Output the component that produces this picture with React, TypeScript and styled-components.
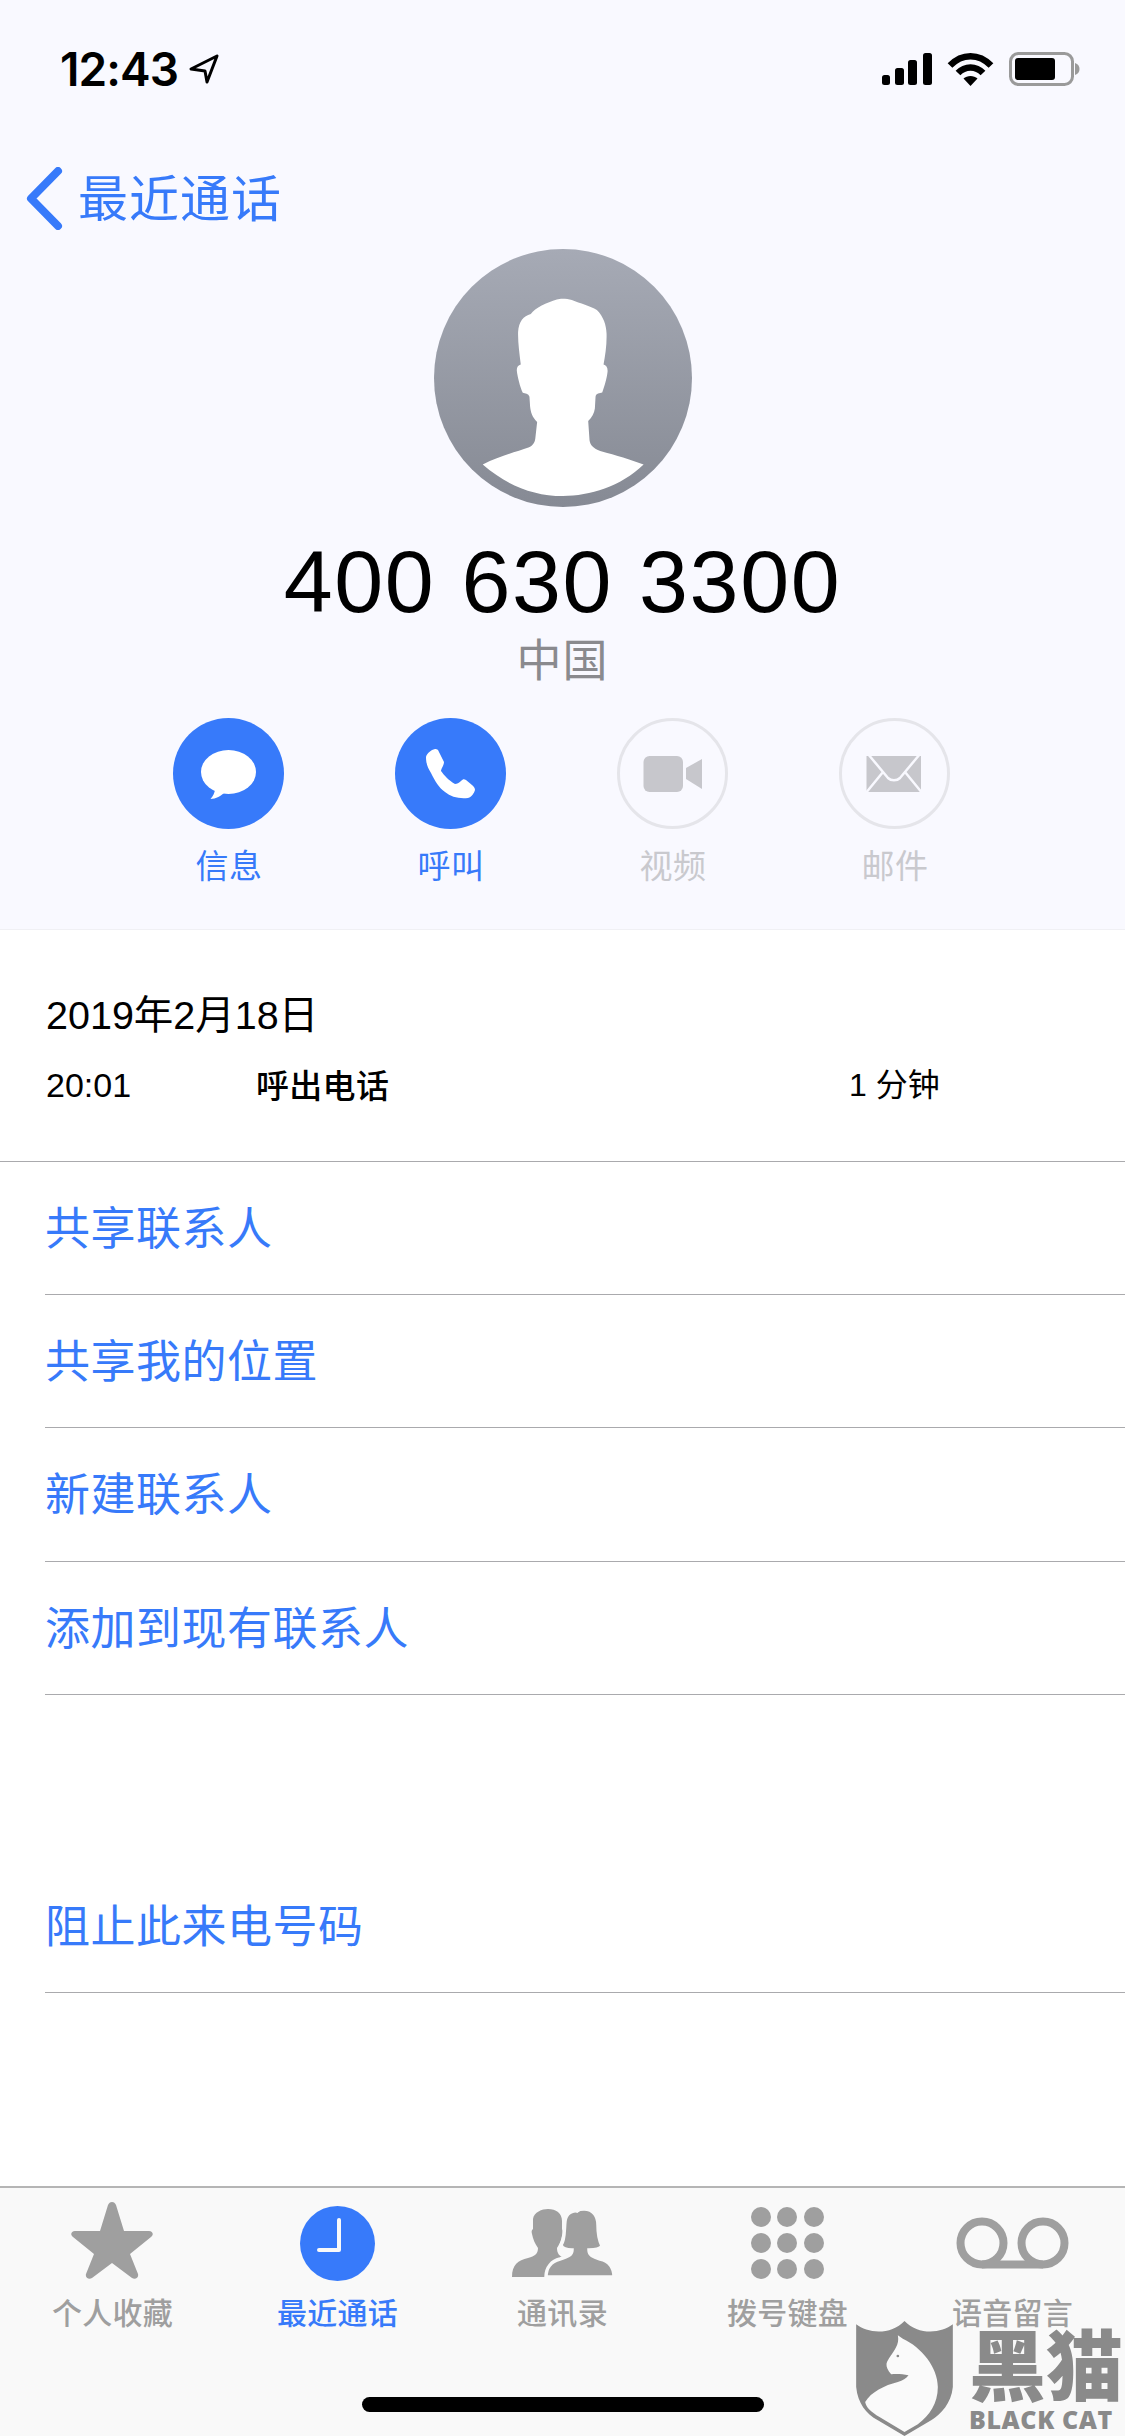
import React from "react";
import styled, { createGlobalStyle } from "styled-components";

const BLUE = "#377afa";
const CJK = `"Noto Sans CJK SC", "Noto Sans", sans-serif`;
const LATIN = `"Liberation Sans", "Noto Sans CJK SC", sans-serif`;

const Global = createGlobalStyle`
  html, body { margin: 0; padding: 0; background: #fff; }
  * { box-sizing: border-box; }
`;

const Page = styled.div`
  position: relative;
  width: 1125px;
  height: 2436px;
  overflow: hidden;
  display: flex;
  flex-direction: column;
  background: #fff;
  font-family: ${CJK};
`;

const Header = styled.header`
  height: 930px;
  flex: none;
  display: flex;
  flex-direction: column;
  background: #f9f9ff;
  border-bottom: 1px solid #f0f0f4;
`;

const StatusBar = styled.div`
  height: 136px;
  flex: none;
  padding: 52px 45px 0 60px;
  display: flex;
  align-items: flex-start;
  justify-content: space-between;
`;

const StatusLeft = styled.div`
  display: flex;
  align-items: center;
  gap: 10px;
  height: 34px;
`;

const Clock = styled.span`
  font: 600 46px/34px Inter, ${LATIN};
  letter-spacing: -0.9px;
  color: #000;
`;

const StatusRight = styled.div`
  display: flex;
  align-items: flex-start;
  gap: 15px;
`;

const Nav = styled.nav`
  height: 113px;
  flex: none;
  padding: 11px 0 0 26px;
  display: flex;
  align-items: center;
  gap: 15px;
  color: ${BLUE};
`;

const BackLabel = styled.span`
  font-size: 50px;
  line-height: 60px;
  letter-spacing: 1px;
  position: relative;
  top: -3px;
`;

const AvatarDisc = styled.svg`
  width: 258px;
  height: 258px;
  flex: none;
  align-self: center;
  display: block;
`;

const PhoneNumber = styled.h1`
  margin: 25px 0 0;
  height: 100px;
  text-align: center;
  font: 400 88px/100px ${LATIN};
  letter-spacing: 1.6px;
  color: #000;
`;

const Country = styled.div`
  margin-top: 1px;
  height: 50px;
  text-align: center;
  font-size: 45px;
  letter-spacing: 1px;
  line-height: 50px;
  color: #8a8a8e;
`;

const Actions = styled.div`
  margin-top: 35px;
  padding-left: 117px;
  display: grid;
  grid-template-columns: repeat(4, 222px);
`;

const Action = styled.div<{ $on?: boolean }>`
  display: flex;
  flex-direction: column;
  align-items: center;
  gap: 15px;
  color: ${(p) => (p.$on ? BLUE : "#c9c9ce")};
`;

const ActionCircle = styled.div<{ $on?: boolean }>`
  width: 111px;
  height: 111px;
  border-radius: 50%;
  background: ${(p) => (p.$on ? BLUE : "transparent")};
  border: ${(p) => (p.$on ? "none" : "3px solid #e5e5ea")};
  display: flex;
  align-items: center;
  justify-content: center;
`;

const ActionLabel = styled.span`
  padding-left: 2px;
  font-size: 33px;
  letter-spacing: 0.5px;
  line-height: 40px;
`;

const CallLog = styled.section`
  height: 232px;
  flex: none;
  padding: 61px 0 0 46px;
  border-bottom: 1px solid #aaaaad;
  color: #000;
`;

const CallDate = styled.div`
  font: 400 39.5px/48px ${LATIN};
`;

const CallRow = styled.div`
  margin-top: 26px;
  display: grid;
  grid-template-columns: 210px 593px auto;
  font: 400 34px/40px ${LATIN};
`;

const CallType = styled.span`
  font-weight: 500;
  font-size: 33px;
  letter-spacing: 0.3px;
  line-height: 38px;
  font-family: ${CJK};
`;

const CallLength = styled.span`
  font-size: 32px;
`;

const LinkRow = styled.div`
  height: 133.2px;
  flex: none;
  margin-left: 45px;
  padding-bottom: 5px;
  display: flex;
  align-items: center;
  border-bottom: 1px solid #aaaaad;
  font-size: 45px;
  letter-spacing: 0.5px;
  color: ${BLUE};
`;

const Spacer = styled.div`
  height: 165px;
  flex: none;
`;

const TabBar = styled.footer`
  margin-top: auto;
  height: 250px;
  flex: none;
  background: #f9f9f9;
  border-top: 2px solid #b5b5b5;
  padding-top: 12px;
  display: flex;
  flex-direction: column;
  align-items: center;
`;

const Tabs = styled.div`
  width: 100%;
  display: grid;
  grid-template-columns: repeat(5, 225px);
`;

const Tab = styled.div<{ $on?: boolean }>`
  display: flex;
  flex-direction: column;
  align-items: center;
  color: ${(p) => (p.$on ? BLUE : "#9f9f9f")};
`;

const TabIcon = styled.div`
  height: 86px;
  display: flex;
  align-items: center;
  justify-content: center;
`;

const TabLabel = styled.span`
  margin-top: 5px;
  font-size: 30px;
  letter-spacing: 0.3px;
  line-height: 40px;
  font-weight: 500;
`;

const HomeIndicator = styled.div`
  margin-top: 66px;
  width: 402px;
  height: 15px;
  border-radius: 8px;
  background: #000;
`;

const Watermark = styled.div`
  position: absolute;
  left: 856px;
  top: 2321px;
  display: flex;
  align-items: flex-start;
  gap: 16px;
  color: #8a8a8a;
`;

const WatermarkText = styled.div`
  width: 156px;
  padding-top: 1px;
  display: flex;
  flex-direction: column;
  align-items: flex-start;
`;

const WatermarkCn = styled.span`
  font-size: 77px;
  line-height: 80px;
  font-weight: 900;
`;

const WatermarkEn = styled.span`
  font: 800 25px/26px "Open Sans", ${LATIN};
  letter-spacing: 0.6px;
  white-space: nowrap;
  margin-top: 4px;
`;

const Bars = () => (
  <svg width="50" height="32" viewBox="0 0 50 32" style={{ marginTop: 1 }}>
    <rect x="0" y="22" width="8" height="10" rx="2.5" />
    <rect x="13" y="15" width="9" height="17" rx="2.5" />
    <rect x="26" y="7" width="9" height="25" rx="2.5" />
    <rect x="41" y="0" width="9" height="32" rx="2.5" />
  </svg>
);

const Wifi = () => (
  <svg width="47" height="34" viewBox="0 0 47 34" fill="none" stroke="#000" strokeWidth="6.5">
    <path d="M3 13.5 C15 1 32 1 44 13.5" />
    <path d="M11 21 C18 13.5 29 13.5 36 21" />
    <path d="M23.5 34 L16.5 26.5 C20 23 27 23 30.5 26.5 Z" fill="#000" stroke="none" />
  </svg>
);

const Battery = () => (
  <svg width="71" height="34" viewBox="0 0 71 34">
    <rect x="1.5" y="1.5" width="62" height="31" rx="8" fill="none" stroke="#9a9a9a" strokeWidth="3" />
    <rect x="6" y="6" width="40" height="22" rx="3" fill="#000" />
    <path d="M66 11 C69 12 70.5 14 70.5 17 C70.5 20 69 22 66 23 Z" fill="#9a9a9a" />
  </svg>
);

export default function App() {
  return (
    <Page>
      <Global />
      <Header>
        <StatusBar>
          <StatusLeft>
            <Clock>12:43</Clock>
            <svg width="32" height="32" viewBox="0 0 32 32" fill="none" stroke="#000" strokeWidth="3" strokeLinejoin="round">
              <path d="M29 3 L3 16 L17 18 L19 29 Z" />
            </svg>
          </StatusLeft>
          <StatusRight>
            <Bars />
            <Wifi />
            <Battery />
          </StatusRight>
        </StatusBar>
        <Nav>
          <svg width="37" height="63" viewBox="0 0 37 63" fill="none" stroke={BLUE} strokeWidth="8" strokeLinecap="round" strokeLinejoin="round">
            <path d="M32 4 L5 31.5 L32 59" />
          </svg>
          <BackLabel>最近通话</BackLabel>
        </Nav>
        <AvatarDisc viewBox="102 57 773 773">
          <defs>
            <linearGradient id="avatarFill" x1="0" y1="0" x2="0" y2="1">
              <stop offset="0" stopColor="#a6aab5" />
              <stop offset="1" stopColor="#868a94" />
            </linearGradient>
          </defs>
          <circle cx="488.5" cy="443.5" r="386.5" fill="url(#avatarFill)" />
          <path
            fill="#fff"
            d="M248 703 C300 675 350 665 385 652 C400 645 405 635 406 620 L411 575 C395 560 392 545 390 530 L388 500 C385 490 375 490 368 488 C360 470 352 440 350 420 C350 410 355 405 362 403 C358 370 353 335 354 305 C356 275 370 258 392 252 C405 232 440 218 470 208 C480 205 500 205 515 210 C540 220 570 228 590 240 C610 260 618 285 619 310 C620 345 615 375 610 403 C618 405 623 412 622 425 C620 445 612 470 606 487 C598 490 588 488 586 500 L584 535 C582 550 575 562 564 572 L568 630 C570 645 580 655 600 662 C650 675 690 688 730 703 C660 770 570 797 488 797 C400 797 320 765 248 703 Z"
          />
        </AvatarDisc>
        <PhoneNumber>400 630 3300</PhoneNumber>
        <Country>中国</Country>
        <Actions>
          <Action $on>
            <ActionCircle $on>
              <svg width="111" height="111" viewBox="0 0 111 111" fill="#fff">
                <ellipse cx="55.5" cy="54" rx="27.5" ry="22" />
                <path d="M42 70 C42 75 40 78 37.5 81 C43 81 48 78 52 74 Z" />
              </svg>
            </ActionCircle>
            <ActionLabel>信息</ActionLabel>
          </Action>
          <Action $on>
            <ActionCircle $on>
              <svg width="111" height="111" viewBox="0 0 111 111" fill="#fff">
                <path d="M40 31 C36 32 32 35 31 39 C31 46 33 50 36 55 C40 63 44 70 50 74 C56 79 64 81 73 80 C77 79 79 75 80 72 C80 70 79 69 77 67 L71 62 C69 61 68 61 66 63 C64 65 62 66 60 66 C53 62 49 57 46 53 C46 51 49 47 49 44 L43 32 C42 31 41 31 40 31 Z" />
              </svg>
            </ActionCircle>
            <ActionLabel>呼叫</ActionLabel>
          </Action>
          <Action>
            <ActionCircle>
              <svg width="105" height="105" viewBox="3 3 105 105" fill="#c7c7cc">
                <rect x="26.5" y="38" width="39.5" height="36" rx="6" />
                <path d="M69 50 L85 41 V71 L69 61 Z" />
              </svg>
            </ActionCircle>
            <ActionLabel>视频</ActionLabel>
          </Action>
          <Action>
            <ActionCircle>
              <svg width="105" height="105" viewBox="3 3 105 105">
                <rect x="27.5" y="38" width="54.5" height="36" fill="#c7c7cc" />
                <path d="M29 36 L49 60 C52 63 58 63 61 60 L81 36 M26 76 L44 54 M84 76 L66 54" fill="none" stroke="#f9f9ff" strokeWidth="2.5" />
              </svg>
            </ActionCircle>
            <ActionLabel>邮件</ActionLabel>
          </Action>
        </Actions>
      </Header>

      <CallLog>
        <CallDate>2019年2月18日</CallDate>
        <CallRow>
          <span>20:01</span>
          <CallType>呼出电话</CallType>
          <CallLength>1 分钟</CallLength>
        </CallRow>
      </CallLog>

      <LinkRow>共享联系人</LinkRow>
      <LinkRow>共享我的位置</LinkRow>
      <LinkRow>新建联系人</LinkRow>
      <LinkRow>添加到现有联系人</LinkRow>
      <Spacer />
      <LinkRow>阻止此来电号码</LinkRow>

      <TabBar>
        <Tabs>
          <Tab>
            <TabIcon>
              <svg width="82" height="78" viewBox="0 0 82 78" fill="#9f9f9f" style={{ marginTop: -6, marginLeft: -2 }}>
                <path d="M41 1 C43 1 44 2 45 4 L53 30 L78 30 C82 30 83 34 80 36 L59 53 L67 73 C68 77 64 79 61 77 L41 62 L21 77 C18 79 14 77 15 73 L23 53 L2 36 C-1 34 0 30 4 30 L29 30 L37 4 C38 2 39 1 41 1 Z" />
              </svg>
            </TabIcon>
            <TabLabel>个人收藏</TabLabel>
          </Tab>
          <Tab $on>
            <TabIcon>
              <svg width="75" height="75" viewBox="0 0 75 75">
                <circle cx="37.5" cy="37.5" r="37.5" fill={BLUE} />
                <path d="M39 14 V44 H19" fill="none" stroke="#f9f9f9" strokeWidth="4" strokeLinecap="round" strokeLinejoin="round" />
              </svg>
            </TabIcon>
            <TabLabel>最近通话</TabLabel>
          </Tab>
          <Tab>
            <TabIcon>
              <svg width="102" height="68" viewBox="0 0 102 68" fill="#9f9f9f">
                <path d="M0 68 C0 56 6 51 16 49 C23 47 26 45 26 39 C23 35 21 30 20 25 C19 22 20 21 21 20 L21 10 C22 3 30 0 36 0 C44 0 50 4 50 12 L50 20 C51 22 51 24 50 27 C49 32 47 36 45 39 C45 44 47 47 52 49 L40 68 Z" />
                <path d="M34 68 C34 58 40 52 48 50 C55 48 60 46 60 41 C54 41 50 39 49 36 C53 31 52 20 53 12 C54 4 61 1 65 2 C67 0 70 0 72 0 C82 0 86 8 86 16 C86 26 88 33 90 37 C88 40 83 41 77 41 C77 46 81 48 88 50 C97 52 102 58 102 68 Z" stroke="#f9f9f9" strokeWidth="3.5" />
              </svg>
            </TabIcon>
            <TabLabel>通讯录</TabLabel>
          </Tab>
          <Tab>
            <TabIcon>
              <svg width="73" height="72" viewBox="0 0 73 72" fill="#9f9f9f">
                <circle cx="10" cy="10" r="10" />
                <circle cx="36" cy="10" r="10" />
                <circle cx="63" cy="10" r="10" />
                <circle cx="10" cy="36" r="10" />
                <circle cx="36" cy="36" r="10" />
                <circle cx="63" cy="36" r="10" />
                <circle cx="10" cy="62" r="10" />
                <circle cx="36" cy="62" r="10" />
                <circle cx="63" cy="62" r="10" />
              </svg>
            </TabIcon>
            <TabLabel>拨号键盘</TabLabel>
          </Tab>
          <Tab>
            <TabIcon>
              <svg width="113" height="52" viewBox="0 0 113 52" fill="none" stroke="#9f9f9f" strokeWidth="8">
                <circle cx="26" cy="26" r="21.5" />
                <circle cx="87" cy="26" r="21.5" />
                <path d="M26 47.5 H87" />
              </svg>
            </TabIcon>
            <TabLabel>语音留言</TabLabel>
          </Tab>
        </Tabs>
        <HomeIndicator />
      </TabBar>

      <Watermark>
        <svg width="97" height="115" viewBox="765 452 290 345">
          <path fill="#8a8a8a" d="M765 462 C800 490 870 495 910 452 C950 495 1020 490 1055 462 L1055 650 C1050 700 1020 730 990 750 L910 797 L830 750 C795 730 770 700 765 650 Z" />
          <path fill="#fafafa" d="M890 495 L905 505 C960 530 1010 590 1010 650 C1010 700 985 735 950 762 L910 785 L835 740 C810 725 795 712 792 695 C810 665 850 645 890 635 C905 630 915 625 922 615 C905 612 890 610 870 612 C860 600 855 590 856 580 C860 565 875 550 885 530 C890 520 893 510 890 495 Z" />
          <circle cx="890" cy="557" r="4" fill="#8a8a8a" />
        </svg>
        <WatermarkText>
          <WatermarkCn>黑猫</WatermarkCn>
          <WatermarkEn>BLACK CAT</WatermarkEn>
        </WatermarkText>
      </Watermark>
    </Page>
  );
}
